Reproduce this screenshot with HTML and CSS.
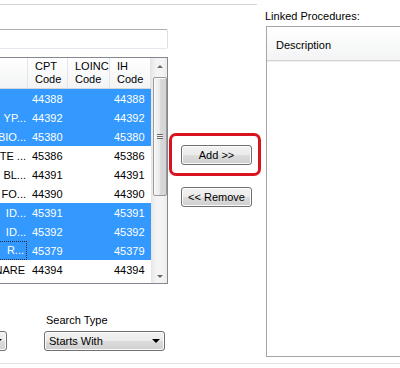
FILE: index.html
```html
<!DOCTYPE html>
<html lang="en">
<head>
    <meta charset="UTF-8">
    <title>Link Procedures</title>
    <link rel="stylesheet" href="styles.css">
</head>
<body>
    <div class="dialog">
        <div class="main">
            <div class="search-group">
                <div class="search-col">
                    <input class="search-box" type="text">
                    <div class="list">
                        <div class="list-main">
                            <div class="list-head">
                                <div class="head-cell c-desc"></div>
                                <div class="head-cell c-cpt">CPT<br>Code</div>
                                <div class="head-cell c-loinc">LOINC<br>Code</div>
                                <div class="head-cell c-ih">IH<br>Code</div>
                            </div>
                            <div class="row sel">
                                <div class="cell c-desc desc"></div>
                                <div class="cell c-cpt">44388</div>
                                <div class="cell c-loinc"></div>
                                <div class="cell c-ih">44388</div>
                            </div>
                            <div class="row sel">
                                <div class="cell c-desc desc"><span>YP...</span></div>
                                <div class="cell c-cpt">44392</div>
                                <div class="cell c-loinc"></div>
                                <div class="cell c-ih">44392</div>
                            </div>
                            <div class="row sel">
                                <div class="cell c-desc desc"><span>BIO...</span></div>
                                <div class="cell c-cpt">45380</div>
                                <div class="cell c-loinc"></div>
                                <div class="cell c-ih">45380</div>
                            </div>
                            <div class="row">
                                <div class="cell c-desc desc"><span>TE ...</span></div>
                                <div class="cell c-cpt">45386</div>
                                <div class="cell c-loinc"></div>
                                <div class="cell c-ih">45386</div>
                            </div>
                            <div class="row">
                                <div class="cell c-desc desc"><span>BL...</span></div>
                                <div class="cell c-cpt">44391</div>
                                <div class="cell c-loinc"></div>
                                <div class="cell c-ih">44391</div>
                            </div>
                            <div class="row">
                                <div class="cell c-desc desc"><span>FO...</span></div>
                                <div class="cell c-cpt">44390</div>
                                <div class="cell c-loinc"></div>
                                <div class="cell c-ih">44390</div>
                            </div>
                            <div class="row sel">
                                <div class="cell c-desc desc"><span>ID...</span></div>
                                <div class="cell c-cpt">45391</div>
                                <div class="cell c-loinc"></div>
                                <div class="cell c-ih">45391</div>
                            </div>
                            <div class="row sel">
                                <div class="cell c-desc desc"><span>ID...</span></div>
                                <div class="cell c-cpt">45392</div>
                                <div class="cell c-loinc"></div>
                                <div class="cell c-ih">45392</div>
                            </div>
                            <div class="row sel">
                                <div class="cell c-desc desc focus"><span>R...</span></div>
                                <div class="cell c-cpt">45379</div>
                                <div class="cell c-loinc"></div>
                                <div class="cell c-ih">45379</div>
                            </div>
                            <div class="row">
                                <div class="cell c-desc desc fit"><span>NARE</span></div>
                                <div class="cell c-cpt">44394</div>
                                <div class="cell c-loinc"></div>
                                <div class="cell c-ih">44394</div>
                            </div>
                        </div>
                        <div class="vscroll">
                            <div class="sb-btn"><span class="arr-up"></span></div>
                            <div class="sb-track">
                                <div class="sb-thumb"><span class="grip"></span></div>
                            </div>
                            <div class="sb-btn sb-btn-down"><span class="arr-down"></span></div>
                        </div>
                    </div>
                    <div class="filters">
                        <div class="field">
                            <div class="combo combo-short"><span class="combo-arrow"></span></div>
                        </div>
                        <div class="field">
                            <label class="field-label">Search Type</label>
                            <div class="combo combo-type">Starts With<span class="combo-arrow"></span></div>
                        </div>
                    </div>
                </div>
                <div class="actions">
                    <button class="btn btn-add">Add &gt;&gt;</button>
                    <button class="btn">&lt;&lt; Remove</button>
                </div>
            </div>
            <div class="linked">
                <div class="linked-label">Linked Procedures:</div>
                <div class="linked-list">
                    <div class="linked-head">Description</div>
                </div>
            </div>
        </div>
        <div class="bottom-rule"></div>
    </div>
</body>
</html>
```

FILE: styles.css
```css
body {
    margin: 0;
    width: 400px;
    height: 368px;
    overflow: hidden;
    background: #ffffff;
    font-family: "Liberation Sans", Arial, sans-serif;
    font-size: 11px;
    color: #000000;
}
.dialog {
    display: flex;
    flex-direction: column;
}
.main {
    display: flex;
    align-items: flex-start;
}
.search-group {
    display: flex;
    flex-shrink: 0;
    width: 297px;
    margin-top: 4px;
    margin-left: -40px;
    border-top: 1px solid #d5d5d5;
}
.search-col {
    width: 208px;
    padding-top: 24px;
    display: flex;
    flex-direction: column;
}
.search-box {
    box-sizing: border-box;
    width: 208px;
    height: 20px;
    margin: 0;
    border: 1px solid #dbdfe6;
    border-top-color: #abadb3;
    border-bottom-color: #e3e9ef;
    border-radius: 2px;
    background: #ffffff;
}

/* list view */
.list {
    box-sizing: border-box;
    height: 227px;
    margin-top: 8px;
    border: 1px solid #828790;
    display: flex;
    background: #ffffff;
}
.list-main {
    width: 190px;
    display: flex;
    flex-direction: column;
}
.list-head {
    box-sizing: border-box;
    height: 31px;
    display: flex;
    border-bottom: 1px solid #d5d5d5;
    background: linear-gradient(#ffffff, #f3f4f5);
}
.head-cell {
    box-sizing: border-box;
    padding: 2px 0 0 7px;
    line-height: 13px;
    border-right: 1px solid #e3e5e7;
    white-space: nowrap;
    overflow: hidden;
}
.c-desc { width: 67px; }
.c-cpt { width: 40px; }
.c-loinc { width: 42px; }
.c-ih { width: 41px; }
.row {
    display: flex;
    height: 19px;
    line-height: 19px;
}
.row.sel {
    background: #3399ff;
    color: #ffffff;
}
.cell {
    box-sizing: border-box;
    padding-left: 4px;
    padding-top: 1px;
    white-space: nowrap;
    overflow: hidden;
}
.desc {
    display: flex;
    justify-content: flex-end;
    padding-right: 2px;
}
.desc span {
    white-space: nowrap;
}
.desc.fit {
    padding-right: 3px;
}
.desc.focus {
    border: 1px dotted #1b2a3a;
    line-height: 17px;
    padding-top: 0;
    padding-right: 2px;
    margin-right: 1px;
    width: 66px;
}

/* scrollbar */
.vscroll {
    box-sizing: border-box;
    width: 16px;
    display: flex;
    flex-direction: column;
    border-left: 1px solid #e6e6e6;
    background: linear-gradient(to right, #e9e9e9, #f4f4f4 30%, #f4f4f4 70%, #ececec);
}
.sb-btn {
    height: 17px;
    display: flex;
    align-items: center;
    justify-content: center;
}
.sb-btn-down {
    height: 13px;
}
.arr-up, .arr-down {
    width: 0;
    height: 0;
    border-left: 3px solid transparent;
    border-right: 3px solid transparent;
}
.arr-up {
    border-bottom: 3px solid #6a6a6a;
}
.arr-down {
    border-top: 3px solid #6a6a6a;
}
.sb-track {
    flex: 1;
    display: flex;
    flex-direction: column;
    align-items: center;
}
.sb-thumb {
    box-sizing: border-box;
    width: 14px;
    height: 119px;
    margin-top: 2px;
    border: 1px solid #9b9b9b;
    border-radius: 2px;
    background: linear-gradient(to right, #f5f5f5, #eaeaea 45%, #d9d9d9 55%, #d4d4d4);
    box-shadow: inset 1px 1px 0 #fbfbfb;
    display: flex;
    align-items: center;
    justify-content: center;
}
.grip {
    width: 6px;
    height: 5px;
    background: repeating-linear-gradient(#6a6a6a 0, #6a6a6a 1px, #f0f0f0 1px, #f0f0f0 2px);
}

/* bottom filters */
.filters {
    display: flex;
    align-items: flex-end;
    gap: 37px;
    margin-top: 30px;
}
.field {
    display: flex;
    flex-direction: column;
}
.field-label {
    line-height: 13px;
    margin-bottom: 4px;
    padding-left: 2px;
}
.combo {
    box-sizing: border-box;
    height: 20px;
    position: relative;
    display: flex;
    align-items: center;
    padding-left: 4px;
    border: 1px solid #707070;
    border-radius: 3px;
    background: linear-gradient(#f2f2f2 0%, #ebebeb 49%, #dddddd 50%, #cfcfcf 100%);
    box-shadow: inset 0 0 0 1px #fafafa;
}
.combo-short { width: 47px; }
.combo-type { width: 121px; }
.combo-arrow {
    position: absolute;
    right: 4px;
    top: 7px;
    width: 0;
    height: 0;
    border-left: 4px solid transparent;
    border-right: 4px solid transparent;
    border-top: 4px solid #000000;
}

/* middle buttons */
.actions {
    box-sizing: border-box;
    width: 89px;
    padding: 140px 0 0 13px;
    display: flex;
    flex-direction: column;
    gap: 22px;
}
.btn {
    box-sizing: border-box;
    width: 71px;
    height: 20px;
    margin: 0;
    padding: 0;
    font-family: inherit;
    font-size: 11px;
    color: #000000;
    border: 1px solid #707070;
    border-radius: 3px;
    background: linear-gradient(#f2f2f2 0%, #ebebeb 49%, #dddddd 50%, #cfcfcf 100%);
    box-shadow: inset 0 0 0 1px #fbfbfb;
}
.btn-add {
    position: relative;
}
.btn-add::after {
    content: "";
    position: absolute;
    left: -13px;
    right: -10px;
    top: -13px;
    bottom: -12px;
    border: 3px solid #d9141e;
    border-radius: 7px;
}

/* right panel */
.linked {
    flex-shrink: 0;
    width: 160px;
    margin-left: 8px;
    padding-top: 10px;
}
.linked-label {
    line-height: 13px;
}
.linked-list {
    box-sizing: border-box;
    height: 331px;
    margin-top: 3px;
    margin-left: 1px;
    border: 1px solid #a5a5a5;
    background: #ffffff;
}
.linked-head {
    box-sizing: border-box;
    height: 34px;
    padding-left: 9px;
    padding-top: 2px;
    display: flex;
    align-items: center;
    border-bottom: 1px solid #d5d5d5;
    background: linear-gradient(#ffffff, #f3f4f5);
    box-shadow: 0 1px 0 #eeeeee;
}
.bottom-rule {
    height: 1px;
    margin-top: 6px;
    background: #dfe3e6;
}
```
